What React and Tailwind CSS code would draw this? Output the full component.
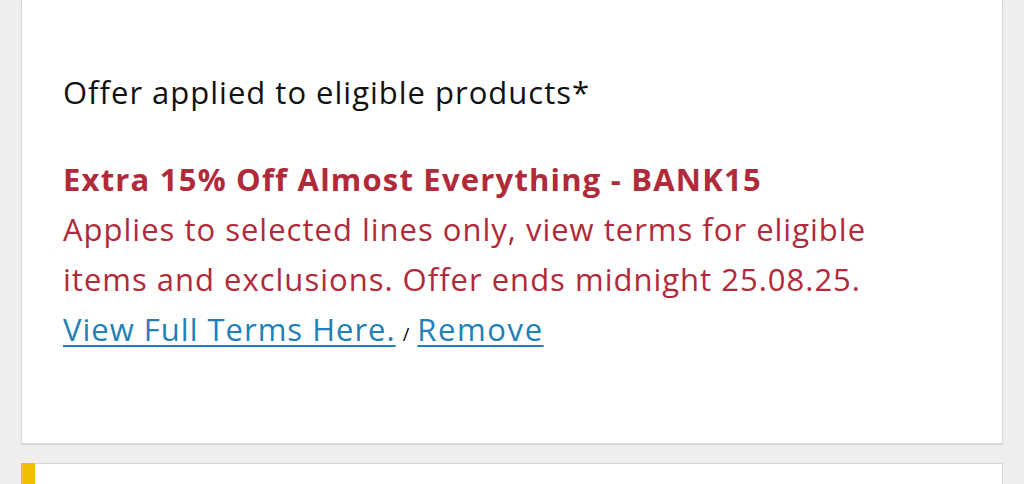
import React from "react";

const App = () => {
    return (
        <div className="min-h-screen bg-[#eeeeee] px-[21px] pb-4" style={{ fontFamily: '"Open Sans", "Noto Sans", sans-serif' }}>
            <div className="bg-white border border-t-0 border-[#d8d8d8] shadow-[0_1px_1px_rgba(0,0,0,0.08)] pl-[41px] pr-6 pt-[67px] pb-[84px]">
                <p className="text-[31px] leading-[50px] tracking-[1px] text-[#111111]">
                    Offer applied to eligible products*
                </p>
                <div className="mt-[37px] text-[31px] leading-[50px] tracking-[1px]">
                    <p className="font-bold text-[#b02a3a] tracking-[1.2px]">
                        Extra 15% Off Almost Everything - BANK15
                    </p>
                    <p className="text-[#b02a3a] max-w-[850px]">
                        Applies to selected lines only, view terms for eligible items and exclusions. Offer ends midnight 25.08.25.
                    </p>
                    <p>
                        <a href="#" className="text-[#2180b6] underline decoration-2 underline-offset-4">View Full Terms Here.</a>
                        <span className="text-[18px] text-black mx-[7px]">/</span>
                        <a href="#" className="text-[#2180b6] underline decoration-2 underline-offset-4 tracking-[1.6px]">Remove</a>
                    </p>
                </div>
            </div>

            <div className="mt-[19px] flex bg-white border border-[#d8d8d8] h-[40px]">
                <div className="w-[14px] bg-[#f0c000] -ml-px -mt-px"></div>
                <div className="flex-1"></div>
            </div>
        </div>
    );
};

export default App;
